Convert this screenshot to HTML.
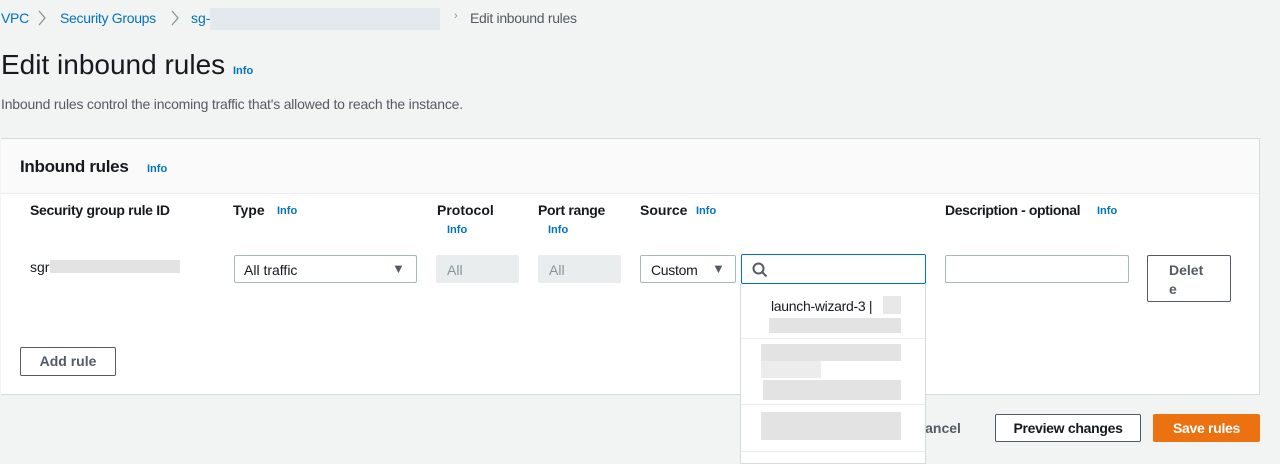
<!DOCTYPE html>
<html><head><style>
*{box-sizing:border-box;margin:0;padding:0}
body{width:1280px;height:458px;overflow:hidden;background:#f2f3f3;font-family:"Liberation Sans",sans-serif;color:#16191f;position:relative;font-size:14px}
.a{position:absolute;white-space:nowrap}
.lk{color:#0073bb}
.i{color:#0073bb;font-size:11px;font-weight:bold}
.b{font-weight:bold}
.blur{position:absolute;background:#e3e3e3}
.inp{position:absolute;background:#fff;border:1px solid #aab7b8;border-radius:2px}
.btn{position:absolute;background:#fff;border:1px solid #545b64;border-radius:2px;font-weight:bold;color:#545b64;text-align:center}
.chev{position:absolute}
</style></head><body>
<div class="a lk" style="left:1px;top:10px;letter-spacing:-0.3px">VPC</div>
<svg class="chev" style="left:37px;top:10px" width="10" height="16" viewBox="0 0 10 16"><path d="M2 1l6 7-6 7" fill="none" stroke="#879596" stroke-width="1.3"/></svg>
<div class="a lk" style="left:60px;top:10px;letter-spacing:-0.3px">Security Groups</div>
<svg class="chev" style="left:170px;top:10px" width="10" height="16" viewBox="0 0 10 16"><path d="M2 1l6 7-6 7" fill="none" stroke="#879596" stroke-width="1.3"/></svg>
<div class="a lk" style="left:191px;top:10px">sg-</div>
<div class="blur" style="left:210px;top:8px;width:230px;height:22px;background:#e4e9ee"></div>
<div class="a" style="left:454px;top:10px;color:#879596;font-size:11px">&#8250;</div>
<div class="a" style="left:470px;top:10px;color:#545b64;letter-spacing:-0.3px">Edit inbound rules</div>
<div class="a" style="left:1px;top:49px;font-size:28px">Edit inbound rules</div>
<div class="a i" style="left:233px;top:65px">Info</div>
<div class="a" style="left:1px;top:96px;color:#545b64;letter-spacing:-0.2px">Inbound rules control the incoming traffic that's allowed to reach the instance.</div>

<div style="position:absolute;left:1px;top:138px;width:1259px;height:257px;background:#fff;border:1px solid #d5dbdb;border-left:none"></div>
<div style="position:absolute;left:1px;top:139px;width:1258px;height:55px;background:#fafafa;border-bottom:1px solid #eaeded"></div>
<div class="a b" style="left:20px;top:157px;font-size:17px;letter-spacing:-0.3px">Inbound rules</div>
<div class="a i" style="left:147px;top:163px">Info</div>

<div class="a b" style="left:30px;top:202px;letter-spacing:-0.3px">Security group rule ID</div>
<div class="a b" style="left:233px;top:202px">Type</div><div class="a i" style="left:277px;top:205px">Info</div>
<div class="a b" style="left:437px;top:202px">Protocol</div><div class="a i" style="left:447px;top:224px">Info</div>
<div class="a b" style="left:538px;top:202px;letter-spacing:-0.3px">Port range</div><div class="a i" style="left:548px;top:224px">Info</div>
<div class="a b" style="left:640px;top:202px">Source</div><div class="a i" style="left:696px;top:205px">Info</div>
<div class="a b" style="left:945px;top:202px;letter-spacing:-0.4px">Description - optional</div><div class="a i" style="left:1097px;top:205px">Info</div>

<div class="a" style="left:30px;top:259px">sgr</div>
<div class="blur" style="left:50px;top:260px;width:130px;height:13px"></div>
<div class="inp" style="left:234px;top:255px;width:183px;height:28px"><span class="a" style="left:9px;top:6px">All traffic</span><span class="a" style="left:157px;top:5px;font-size:13px;color:#545b64">&#9660;</span></div>
<div class="a" style="left:436px;top:255px;width:83px;height:28px;background:#eaeded;border-radius:2px"><span class="a" style="left:11px;top:7px;color:#879596">All</span></div>
<div class="a" style="left:538px;top:255px;width:83px;height:28px;background:#eaeded;border-radius:2px"><span class="a" style="left:11px;top:7px;color:#879596">All</span></div>
<div class="inp" style="left:640px;top:255px;width:96px;height:28px"><span class="a" style="left:10px;top:6px;letter-spacing:-0.3px">Custom</span><span class="a" style="left:71px;top:5px;font-size:13px;color:#545b64">&#9660;</span></div>
<div class="inp" style="left:741px;top:254px;width:185px;height:30px;border:1px solid #0073bb">
<svg class="a" style="left:10px;top:7px" width="16" height="16" viewBox="0 0 16 16"><circle cx="6.5" cy="6.5" r="5" fill="none" stroke="#545b64" stroke-width="2"/><path d="M10 10l4.5 4.5" stroke="#545b64" stroke-width="2"/></svg></div>
<div class="inp" style="left:945px;top:255px;width:184px;height:28px"></div>
<div class="btn" style="left:1147px;top:255px;width:84px;height:47px;padding:5px 0 0 21px;line-height:19px;text-align:left">Delet<br>e</div>
<div class="btn" style="left:20px;top:347px;width:96px;height:29px;line-height:27px">Add rule</div>

<div class="a" style="left:915px;top:420px;font-weight:bold;color:#545b64">Cancel</div>
<div class="btn" style="left:995px;top:414px;width:146px;height:28px;line-height:26px;color:#16191f;letter-spacing:-0.3px">Preview changes</div>
<div class="a" style="left:1153px;top:414px;width:107px;height:28px;background:#ec7211;border-radius:2px;color:#fff;font-weight:bold;text-align:center;line-height:28px;letter-spacing:-0.3px">Save rules</div>

<div style="position:absolute;left:740px;top:284px;width:186px;height:180px;background:#fff;border:1px solid #d5dbdb;border-top:none">
<div class="a" style="left:30px;top:14px;letter-spacing:-0.3px">launch-wizard-3 |</div>
<div class="blur" style="left:142px;top:12px;width:18px;height:18px;background:#e8e8e8"></div>
<div class="blur" style="left:28px;top:34px;width:132px;height:15px"></div>
<div style="position:absolute;left:0;top:54px;width:184px;border-top:1px solid #eaeded"></div>
<div class="blur" style="left:20px;top:60px;width:140px;height:17px"></div>
<div class="blur" style="left:20px;top:77px;width:60px;height:17px;background:#ececec"></div>
<div class="blur" style="left:22px;top:96px;width:138px;height:20px"></div>
<div style="position:absolute;left:0;top:120px;width:184px;border-top:1px solid #eaeded"></div>
<div class="blur" style="left:20px;top:128px;width:140px;height:28px"></div>
<div style="position:absolute;left:0;top:167px;width:184px;border-top:1px solid #eaeded"></div>
</div>
</body></html>
